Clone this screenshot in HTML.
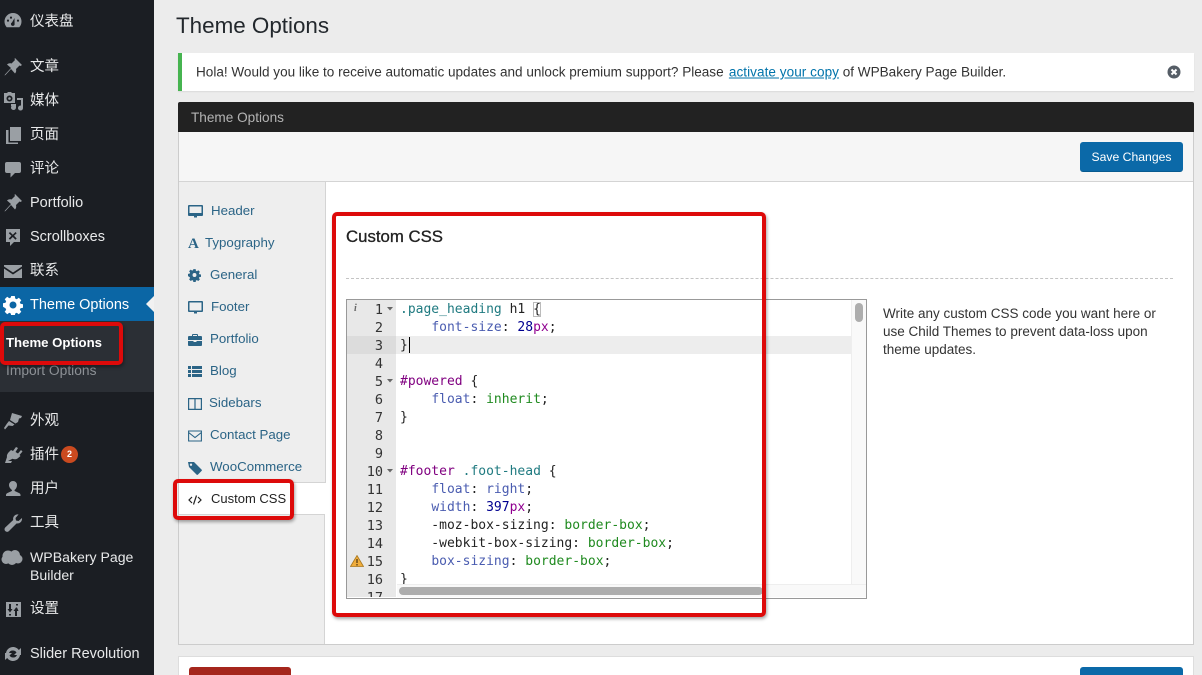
<!DOCTYPE html>
<html lang="zh">
<head>
<meta charset="utf-8">
<title>Theme Options</title>
<style>
html,body{margin:0;padding:0;width:1202px;height:675px;overflow:hidden;background:#ececec}
body{position:relative;font-family:"Liberation Sans","Noto Sans CJK SC",sans-serif;font-size:14px;color:#32373c}
.a{position:absolute}
.t{position:absolute;white-space:nowrap;line-height:18px}
#side{position:absolute;left:0;top:0;width:154px;height:675px;background:#1b1e23}
.m{position:absolute;left:30px;color:#e8e9ea;font-size:14.5px;line-height:18px;white-space:nowrap;transform:translateY(1px)}
.ic{position:absolute;left:3px;width:20px;height:20px;fill:#9a9fa4;transform:translateY(1px)}
.n{position:absolute;color:#2b6486;font-size:13.3px;line-height:18px;white-space:nowrap;transform:translateY(1px)}
.ni{position:absolute;left:188px;width:15px;height:15px;fill:#2b6486}
.ln{position:absolute;width:35px;left:348px;text-align:right;font:13.5px/18px "DejaVu Sans Mono","Liberation Mono",monospace;color:#333;transform:translateY(1px)}
.c{position:absolute;left:400px;font:13px/18px "DejaVu Sans Mono","Liberation Mono",monospace;color:#222;white-space:pre;transform:translateY(1px)}
.red{position:absolute;box-sizing:border-box;border:4px solid #dd0a0a;border-radius:5px;box-shadow:1px 2px 3px rgba(0,0,0,.35)}
.k{color:#4a5cb0}.v{color:#1f8a1f}.s{color:#1f7a80}.i{color:#800080}.d{color:#000090}.u{color:#900090}
</style>
</head>
<body>
<div id="side">
  <div class="a" style="left:0;top:287px;width:154px;height:34px;background:#0b66a5"></div>
  <div class="a" style="left:0;top:321px;width:154px;height:71px;background:#2b2f35"></div>
  <div class="a" style="left:146px;top:296px;border:8px solid transparent;border-right-color:#f1f1f1;border-left:0"></div>

  <svg class="ic" style="top:10px" viewBox="0 0 20 20"><path fill-rule="evenodd" d="M10 2a8.500 8.500 0 0 1 8.500 8.500c0 2.200-.8 4.200-2.200 5.700H3.700A8.500 8.500 0 0 1 1.500 10.500 8.500 8.500 0 0 1 10 2zm1.500 5L9 11.500a1.800 1.800 0 1 0 2.600 1.500zM5 8.500a1.100 1.100 0 1 0 0 2.200 1.100 1.100 0 0 0 0-2.200zm3-3a1.100 1.100 0 1 0 0 2.200 1.100 1.100 0 0 0 0-2.200zm7 3a1.100 1.100 0 1 0 0 2.200 1.100 1.100 0 0 0 0-2.200z"/></svg>
  <div class="m" style="top:12px">仪表盘</div>

  <svg class="ic" style="top:56px" viewBox="0 0 20 20"><path d="M12 1l7 7-1.500 1-1-.5-3.500 3.500c.5 2 0 3.500-1 4.500L8 12l-5.500 6-1 .5.500-1L8 11 4 7.500c1-1 2.500-1.500 4.500-1L12 3l-.5-1z"/></svg>
  <div class="m" style="top:57px">文章</div>

  <svg class="ic" style="top:90px" viewBox="0 0 20 20"><path d="M1 2h3l1-1h3l1 1h3v10H1zm5.500 2.500a3 3 0 1 0 0 6 3 3 0 0 0 0-6zm0 1.700a1.300 1.300 0 1 1 0 2.600 1.300 1.300 0 0 1 0-2.600zM14 7h6v10a2.500 2.500 0 1 1-2-2.400V9h-4zM8 13h5v3.500a2.500 2.500 0 1 1-2-2.400V15H8z"/></svg>
  <div class="m" style="top:91px">媒体</div>

  <svg class="ic" style="top:124px" viewBox="0 0 20 20"><path d="M7 2h11v14H7zM3 5h2.500v12.500H15V19H3z"/></svg>
  <div class="m" style="top:125px">页面</div>

  <svg class="ic" style="top:158px" viewBox="0 0 20 20"><path d="M4 3h12a2 2 0 0 1 2 2v7a2 2 0 0 1-2 2h-4l-4.500 4.500V14H4a2 2 0 0 1-2-2V5a2 2 0 0 1 2-2z"/></svg>
  <div class="m" style="top:159px">评论</div>

  <svg class="ic" style="top:192px" viewBox="0 0 20 20"><path d="M12 1l7 7-1.500 1-1-.5-3.500 3.500c.5 2 0 3.500-1 4.500L8 12l-5.500 6-1 .5.500-1L8 11 4 7.500c1-1 2.500-1.500 4.500-1L12 3l-.5-1z"/></svg>
  <div class="m" style="top:193px">Portfolio</div>

  <svg class="ic" style="top:226px" viewBox="0 0 20 20"><path fill-rule="evenodd" d="M3 2h14v13h-6l-4 4v-4H3zM7 5L5.800 6.200 8.500 8.800 5.800 11.500 7 12.700l2.800-2.700 2.700 2.700 1.200-1.200-2.700-2.700 2.700-2.600L12.500 5 9.800 7.700z"/></svg>
  <div class="m" style="top:227px">Scrollboxes</div>

  <svg class="ic" style="top:260px" viewBox="0 0 20 20"><path d="M1 4h18v1.500l-9 6-9-6zm0 3.500l9 6 9-6V17H1z"/></svg>
  <div class="m" style="top:261px">联系</div>

  <svg class="ic" style="top:294px;fill:#fff" viewBox="0 0 20 20"><path fill-rule="evenodd" d="M8.200 1h3.600l.4 2.500 1.500.7 2.100-1.500 2.500 2.500-1.500 2.100.7 1.500 2.500.4v3.600l-2.500.4-.7 1.500 1.500 2.100-2.500 2.500-2.100-1.500-1.500.7-.4 2.500H8.200l-.4-2.500-1.500-.7-2.100 1.500-2.500-2.500 1.500-2.100-.7-1.500L0 11.800V8.200l2.500-.4.700-1.500-1.500-2.100 2.500-2.500 2.100 1.500 1.500-.7zM10 6.500a3.500 3.500 0 1 0 0 7 3.500 3.500 0 0 0 0-7z"/></svg>
  <div class="m" style="top:295px;color:#fff">Theme Options</div>

  <div class="m" style="left:6px;top:333px;color:#fff;font-weight:bold;font-size:13.2px">Theme Options</div>
  <div class="m" style="left:6px;top:361px;color:#8d9196;font-size:13.8px">Import Options</div>

  <svg class="ic" style="top:410px" viewBox="0 0 20 20"><path d="M9 2l10 3-1 2-2 .5-1 3.500-2.500 1.500L7 9zM6 10l5.500 3.500-2 1.500-4-.5L2 18.500 1 17l3-4.500z"/></svg>
  <div class="m" style="top:411px">外观</div>

  <svg class="ic" style="top:444px" viewBox="0 0 20 20"><path d="M13 2l2 1-2.500 4 2.500 1.500 3-3.500 1.500 1.500-3 3.500 1 1-3 2.500c-1.500 1-3.500 1-5 .3L5 16H9l-1 2H2l2-6C3.500 10 5 8 6 7l2-2 2 1z"/></svg>
  <div class="m" style="top:445px">插件</div>
  <div class="a" style="left:61px;top:446px;width:17px;height:17px;border-radius:50%;background:#ca4a1f;color:#fff;font-size:9px;font-weight:bold;line-height:17px;text-align:center">2</div>

  <svg class="ic" style="top:478px" viewBox="0 0 20 20"><path d="M10 2a4 4 0 0 1 4 4c0 2-1 4-2.500 5l.2 1 4.300 2c1 .5 1.500 1 1.500 2v1H3v-1c0-1 .5-1.500 1.500-2l4.300-2 .2-1C7.500 10 6 8 6 6a4 4 0 0 1 4-4z"/></svg>
  <div class="m" style="top:479px">用户</div>

  <svg class="ic" style="top:512px" viewBox="0 0 20 20"><path d="M19 5c.5 3-2 6-5.500 5.500L6 18a2.500 2.500 0 0 1-3.800-3.500l8-7.500C9.500 3.500 12.500 1 15.500 1.500L12.500 5l.5 2.500 2.500.5z"/></svg>
  <div class="m" style="top:513px">工具</div>

  <svg class="ic" style="top:547px;left:1px;width:22px;height:22px" viewBox="0 0 22 22"><circle cx="7" cy="8" r="5.500"/><circle cx="14" cy="7" r="5"/><circle cx="17" cy="11" r="4.500"/><circle cx="5" cy="11.500" r="4.500"/><circle cx="11" cy="12" r="5"/></svg>
  <div class="m" style="top:547px;font-size:14.1px">WPBakery Page</div>
  <div class="m" style="top:565px;font-size:14.1px">Builder</div>

  <svg class="ic" style="top:598px" viewBox="0 0 20 20"><path fill-rule="evenodd" d="M3 3h15v15H3zM6 5v5H4.500L7 13.500 9.500 10H8V5zm0 10v1.500h2V15zm7-10v1.500h2V5zm0 3.500L10.500 12H12v5h2v-5h1.500L14 8.500z"/></svg>
  <div class="m" style="top:599px">设置</div>

  <svg class="ic" style="top:643px" viewBox="0 0 20 20"><path d="M10 3c2.500 0 4.500 1.200 5.800 3L18 4v7h-7l2.500-2.500A4.500 4.500 0 0 0 10 6.500 4 4 0 0 0 6 9H3c.5-3.500 3.500-6 7-6zM17 11c-.5 3.500-3.500 6-7 6-2.500 0-4.500-1.200-5.800-3L2 16V9h7l-2.500 2.500A4.500 4.500 0 0 0 10 13.500 4 4 0 0 0 14 11z"/></svg>
  <div class="m" style="top:644px">Slider Revolution</div>
</div>

<div class="t" style="left:176px;top:11px;font-size:22.4px;line-height:30px;color:#23282d">Theme Options</div>

<!-- notice -->
<div class="a" style="left:178px;top:53px;width:1016px;height:38px;background:#fff;box-shadow:0 1px 1px rgba(0,0,0,.08)"></div>
<div class="a" style="left:178px;top:53px;width:4px;height:38px;background:#46b450"></div>
<div class="t" style="left:196px;top:63px;font-size:13.56px;color:#333;transform:translateY(0.5px)">Hola! Would you like to receive automatic updates and unlock premium support? Please <span style="color:#0073aa;text-decoration:underline;letter-spacing:.05px;margin-left:1.500px">activate your copy</span> of WPBakery Page Builder.</div>
<svg class="a" style="left:1167px;top:65px" width="14" height="14" viewBox="0 0 14 14"><circle cx="7" cy="7" r="6.500" fill="#555d66"/><path d="M4.500 4.500l5 5M9.500 4.500l-5 5" stroke="#fff" stroke-width="2"/></svg>

<!-- panel -->
<div class="a" style="left:178px;top:102px;width:1016px;height:30px;background:#222;border-radius:2px 2px 0 0"></div>
<div class="t" style="left:191px;top:109px;font-size:13.6px;color:#b4b4b4">Theme Options</div>
<div class="a" style="left:178px;top:132px;width:1014px;height:512px;background:#fff;border:1px solid #ccc;border-top:0"></div>
<div class="a" style="left:179px;top:132px;width:1014px;height:49px;background:#f6f6f6;border-bottom:1px solid #d4d4d4"></div>
<div class="a" style="left:1080px;top:142px;width:103px;height:30px;background:#0b69a8;border-radius:3px;border-bottom:1px solid #075a8f;box-sizing:border-box;color:#fff;font-size:12.2px;line-height:31px;text-align:center">Save Changes</div>

<!-- nav -->
<div class="a" style="left:179px;top:182px;width:146px;height:301px;background:#eee;border-right:1px solid #d4d4d4"></div>
<div class="a" style="left:179px;top:483px;width:147px;height:31px;background:#fff"></div>
<div class="a" style="left:179px;top:514px;width:146px;height:130px;background:#eee;border-right:1px solid #d4d4d4;border-top:1px solid #d4d4d4;box-sizing:border-box"></div>
<div class="a" style="left:179px;top:482px;width:146px;height:1px;background:#d4d4d4"></div>

<svg class="ni" style="top:204px" viewBox="0 0 15 15"><path fill-rule="evenodd" d="M1 1h13a1 1 0 0 1 1 1v9a1 1 0 0 1-1 1H9v1.500H6V12H1a1 1 0 0 1-1-1V2a1 1 0 0 1 1-1zm.5 1.500V9h12V2.500z"/></svg>
<div class="n" style="left:211px;top:201px">Header</div>
<div class="a" style="left:188px;top:235px;font:bold 15px/18px 'Liberation Serif',serif;color:#2b6486">A</div>
<div class="n" style="left:205px;top:233px">Typography</div>
<svg class="ni" style="top:268px;width:13px;height:14px" viewBox="0 0 20 20"><path fill-rule="evenodd" d="M8.200 1h3.600l.4 2.500 1.500.7 2.100-1.500 2.500 2.500-1.500 2.100.7 1.500 2.500.4v3.600l-2.500.4-.7 1.500 1.500 2.100-2.500 2.500-2.100-1.500-1.500.7-.4 2.500H8.200l-.4-2.500-1.500-.7-2.100 1.500-2.500-2.500 1.500-2.100-.7-1.500L0 11.800V8.200l2.500-.4.700-1.500-1.500-2.100 2.500-2.500 2.100 1.500 1.500-.7zM10 7a3 3 0 1 0 0 6 3 3 0 0 0 0-6z"/></svg>
<div class="n" style="left:210px;top:265px">General</div>
<svg class="ni" style="top:300px" viewBox="0 0 15 15"><path fill-rule="evenodd" d="M1 1h13a1 1 0 0 1 1 1v9a1 1 0 0 1-1 1H9v1.500H6V12H1a1 1 0 0 1-1-1V2a1 1 0 0 1 1-1zm.5 1.500V10.500h12V2.500z"/></svg>
<div class="n" style="left:211px;top:297px">Footer</div>
<svg class="ni" style="top:332px;width:14px" viewBox="0 0 14 15"><path d="M5 2h4a1 1 0 0 1 1 1v1h3a1 1 0 0 1 1 1v3H0V5a1 1 0 0 1 1-1h3V3a1 1 0 0 1 1-1zm0 1v1h4V3zM0 9h5.500v1h3V9H14v4a1 1 0 0 1-1 1H1a1 1 0 0 1-1-1z"/></svg>
<div class="n" style="left:210px;top:329px">Portfolio</div>
<svg class="ni" style="top:364px;width:14px" viewBox="0 0 14 15"><path d="M0 2h3v3H0zM4 2h10v3H4zM0 6h3v3H0zM4 6h10v3H4zM0 10h3v3H0zM4 10h10v3H4z"/></svg>
<div class="n" style="left:210px;top:361px">Blog</div>
<svg class="ni" style="top:396px;width:14px" viewBox="0 0 14 15"><path fill-rule="evenodd" d="M0 2h14v12H0zm1.200 1.200v9.600h5.200V3.200zm6.400 0v9.600h5.200V3.200z"/></svg>
<div class="n" style="left:209px;top:393px">Sidebars</div>
<svg class="ni" style="top:428px;width:14px" viewBox="0 0 14 15"><path fill="none" stroke="#2b6486" stroke-width="1.100" d="M.6 3h12.800v10H.6zM.6 4.500L7 9.500l6.400-5"/></svg>
<div class="n" style="left:210px;top:425px">Contact Page</div>
<svg class="ni" style="top:460px;width:14px" viewBox="0 0 14 15"><path d="M0 2h6l7.500 7.500a1 1 0 0 1 0 1.500L10 14.500a1 1 0 0 1-1.500 0L1 7zm3 1.500a1.200 1.200 0 1 0 0 2.400 1.200 1.200 0 0 0 0-2.400z"/></svg>
<div class="n" style="left:210px;top:457px">WooCommerce</div>
<svg class="a" style="left:188px;top:493px" width="14" height="14" viewBox="0 0 14 14"><path fill="none" stroke="#222" stroke-width="1.200" d="M4 4L1 7l3 3M10 4l3 3-3 3M8.500 2.500l-3 9"/></svg>
<div class="n" style="left:211px;top:489px;color:#222;font-size:13px">Custom CSS</div>

<!-- content -->
<div class="t" style="left:346px;top:227px;font-size:16.8px;line-height:20px;font-weight:normal;color:#222;-webkit-text-stroke:.3px #222">Custom CSS</div>
<div class="a" style="left:346px;top:278px;width:827px;border-top:1px dashed #c4c4c4"></div>

<!-- editor -->
<div class="a" style="left:346px;top:299px;width:519px;height:298px;background:#fff;border:1px solid #999"></div>
<div class="a" style="left:347px;top:300px;width:49px;height:297px;background:#e8e8e8"></div>
<div class="a" style="left:347px;top:336px;width:49px;height:18px;background:#dcdcdc"></div>
<div class="a" style="left:396px;top:336px;width:455px;height:18px;background:#ededed"></div>
<div class="a" style="left:851px;top:300px;width:15px;height:297px;background:#f9f9f9;border-left:1px solid #eee;box-sizing:border-box"></div>
<div class="a" style="left:855px;top:303px;width:8px;height:19px;border-radius:4px;background:#adadad"></div>
<div class="a" style="left:397px;top:584px;width:469px;height:13px;background:#f9f9f9;border-top:1px solid #eee;box-sizing:border-box"></div>
<div class="a" style="left:399px;top:587px;width:364px;height:8px;border-radius:4px;background:#adadad"></div>

<div class="t" style="left:354px;top:300px;font:italic bold 10px/18px 'Liberation Serif',serif;color:#666">i</div>
<svg class="a" style="left:350px;top:555px" width="14" height="12" viewBox="0 0 14 12"><path d="M7 .5L13.500 11.500H.5z" fill="#f0ad3c" stroke="#a87820" stroke-width=".8"/><path d="M7 4v4M7 9v1.500" stroke="#4a3510" stroke-width="1.200"/></svg>

<div class="ln" style="top:300px">1</div><div class="ln" style="top:318px">2</div><div class="ln" style="top:336px">3</div><div class="ln" style="top:354px">4</div><div class="ln" style="top:372px">5</div><div class="ln" style="top:390px">6</div><div class="ln" style="top:408px">7</div><div class="ln" style="top:426px">8</div><div class="ln" style="top:444px">9</div><div class="ln" style="top:462px">10</div><div class="ln" style="top:480px">11</div><div class="ln" style="top:498px">12</div><div class="ln" style="top:516px">13</div><div class="ln" style="top:534px">14</div><div class="ln" style="top:552px">15</div><div class="ln" style="top:570px">16</div>
<div class="a" style="left:348px;top:588px;width:35px;height:9px;overflow:hidden"><div class="ln" style="left:0;top:0;height:18px">17</div></div>

<svg class="a" style="left:387px;top:307px" width="6" height="4"><path d="M0 0h6L3 3.500z" fill="#666"/></svg>
<svg class="a" style="left:387px;top:379px" width="6" height="4"><path d="M0 0h6L3 3.500z" fill="#666"/></svg>
<svg class="a" style="left:387px;top:469px" width="6" height="4"><path d="M0 0h6L3 3.500z" fill="#666"/></svg>

<div class="c" style="top:300px"><span class="s">.page_heading</span> h1 <span style="outline:1px solid #bbb;outline-offset:-1px">{</span></div>
<div class="c" style="top:318px">    <span class="k">font-size</span>: <span class="d">28</span><span class="u">px</span>;</div>
<div class="c" style="top:336px">}</div>
<div class="a" style="left:409px;top:337px;width:1px;height:16px;background:#000"></div>
<div class="c" style="top:372px"><span class="i">#powered</span> {</div>
<div class="c" style="top:390px">    <span class="k">float</span>: <span class="v">inherit</span>;</div>
<div class="c" style="top:408px">}</div>
<div class="c" style="top:462px"><span class="i">#footer</span> <span class="s">.foot-head</span> {</div>
<div class="c" style="top:480px">    <span class="k">float</span>: <span class="k">right</span>;</div>
<div class="c" style="top:498px">    <span class="k">width</span>: <span class="d">397</span><span class="u">px</span>;</div>
<div class="c" style="top:516px">    -moz-box-sizing: <span class="v">border-box</span>;</div>
<div class="c" style="top:534px">    -webkit-box-sizing: <span class="v">border-box</span>;</div>
<div class="c" style="top:552px">    <span class="k">box-sizing</span>: <span class="v">border-box</span>;</div>
<div class="a" style="left:400px;top:570px;width:20px;height:14px;overflow:hidden"><div class="c" style="left:0;top:0">}</div></div>

<div class="t" style="left:883px;top:305px;font-size:13.5px;color:#333">Write any custom CSS code you want here or</div>
<div class="t" style="left:883px;top:323px;font-size:13.5px;color:#333">use Child Themes to prevent data-loss upon</div>
<div class="t" style="left:883px;top:341px;font-size:13.5px;color:#333">theme updates.</div>

<!-- bottom -->
<div class="a" style="left:178px;top:656px;width:1016px;height:19px;background:#fff;border:1px solid #ddd;border-bottom:0;box-sizing:border-box"></div>
<div class="a" style="left:189px;top:667px;width:102px;height:8px;background:#a5261c;border-radius:3px 3px 0 0"></div>
<div class="a" style="left:1080px;top:667px;width:103px;height:8px;background:#0b69a8;border-radius:3px 3px 0 0"></div>

<!-- red highlights -->
<div class="red" style="left:332px;top:212px;width:434px;height:405px"></div>
<div class="red" style="left:0;top:322px;width:123px;height:43px"></div>
<div class="red" style="left:173px;top:479px;width:121px;height:41px"></div>
</body>
</html>
